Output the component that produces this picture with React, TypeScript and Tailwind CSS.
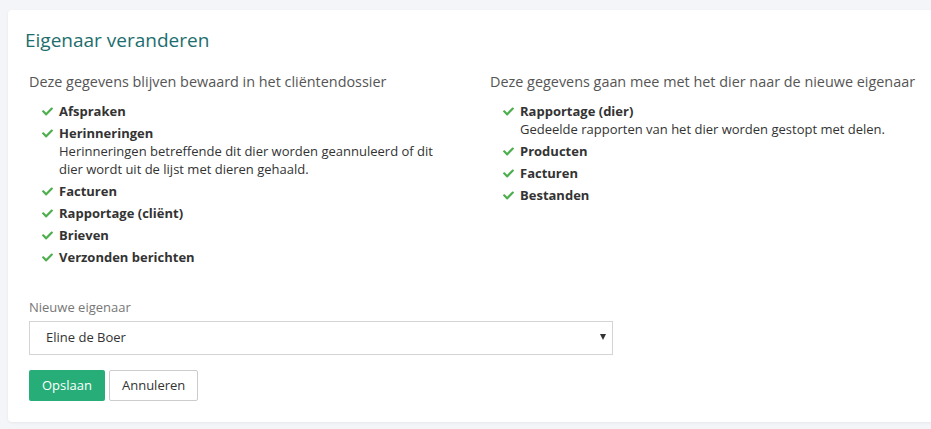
import React, { useState } from 'react';
import { FaCheck } from 'react-icons/fa';

interface DataItem {
  title: string;
  description?: string;
}

// Gegevens die bij de klant blijven
const blijvenItems: DataItem[] = [
  { title: 'Afspraken' },
  {
    title: 'Herinneringen',
    description:
      'Herinneringen betreffende dit dier worden geannuleerd of dit dier wordt uit de lijst met dieren gehaald.',
  },
  { title: 'Facturen' },
  { title: 'Rapportage (cliënt)' },
  { title: 'Brieven' },
  { title: 'Verzonden berichten' },
];

// Gegevens die met het dier meegaan
const meegaanItems: DataItem[] = [
  {
    title: 'Rapportage (dier)',
    description: 'Gedeelde rapporten van het dier worden gestopt met delen.',
  },
  { title: 'Producten' },
  { title: 'Facturen' },
  { title: 'Bestanden' },
];

const eigenaren = ['Eline de Boer', 'Jan Jansen', 'Sanne Visser'];

const CheckList: React.FC<{ heading: string; items: DataItem[] }> = ({ heading, items }) => (
  <div>
    <h4 className="text-[14.4px] leading-5 text-[#555]">{heading}</h4>
    <ul className="mt-[10px] flex flex-col gap-1 pl-[13px]">
      {items.map((item) => (
        <li key={item.title} className="flex items-start text-[13px] leading-[18px] text-[#333]">
          <FaCheck className="mt-[4px] mr-[6px] shrink-0 text-[#4cae4c]" size={11} />
          <div>
            <div className="font-bold">{item.title}</div>
            {item.description && <div className="max-w-[400px]">{item.description}</div>}
          </div>
        </li>
      ))}
    </ul>
  </div>
);

export default function App() {
  const [eigenaar, setEigenaar] = useState(eigenaren[0]);

  return (
    <div
      className="min-h-[429px] overflow-hidden bg-[#f3f5f8] pt-[10px] pl-[8px]"
      style={{ fontFamily: '"Open Sans", "Liberation Sans", sans-serif' }}
    >
      <div className="w-[950px] rounded-l-[4px] bg-white pt-[16px] pb-[21px] shadow-[0_1px_3px_rgba(0,0,0,0.06)]">
        <h2 className="pl-[17px] text-[19px] leading-7 text-[#1c6e6e]">Eigenaar veranderen</h2>

        <div className="mt-[18px] px-[21px]">
          <div className="grid grid-cols-[461px_1fr]">
            <CheckList heading="Deze gegevens blijven bewaard in het cliëntendossier" items={blijvenItems} />
            <CheckList heading="Deze gegevens gaan mee met het dier naar de nieuwe eigenaar" items={meegaanItems} />
          </div>

          {/* Nieuwe eigenaar kiezen */}
          <label className="mt-[32px] block text-[13px] leading-[18px] text-[#777]">Nieuwe eigenaar</label>
          <div className="relative mt-[5px] w-[584px]">
            <select
              value={eigenaar}
              onChange={(e) => setEigenaar(e.target.value)}
              className="h-[34px] w-full appearance-none rounded-none border border-[#d4d4d4] bg-white pl-[16px] text-[13px] text-[#333] outline-none"
            >
              {eigenaren.map((naam) => (
                <option key={naam}>{naam}</option>
              ))}
            </select>
            <span className="pointer-events-none absolute right-[7px] top-[13px] h-0 w-0 border-x-[3.5px] border-t-[6px] border-x-transparent border-t-[#333]" />
          </div>

          <div className="mt-[15px] flex gap-[4px]">
            <button className="h-[31px] rounded-[2px] bg-[#26ad78] px-[13px] text-[13px] text-white">Opslaan</button>
            <button className="h-[31px] rounded-[2px] border border-[#ccc] bg-white px-[12px] text-[13px] text-[#333]">
              Annuleren
            </button>
          </div>
        </div>
      </div>
    </div>
  );
}
